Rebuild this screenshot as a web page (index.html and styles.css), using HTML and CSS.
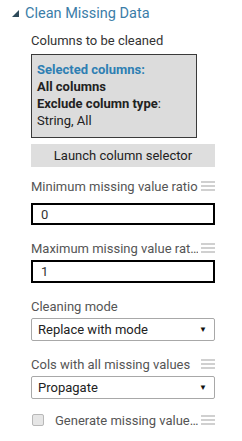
FILE: index.html
```html
<!DOCTYPE html>
<html lang="en">
<head>
    <meta charset="UTF-8">
    <title>Clean Missing Data</title>
    <link rel="stylesheet" href="styles.css">
</head>
<body>
    <div class="panel">
        <div class="panel-title">
            <span class="caret"></span>
            <span>Clean Missing Data</span>
        </div>

        <div class="props">
            <div class="field-label">Columns to be cleaned</div>
            <div class="col-box">
                <div class="sel-head">Selected columns:</div>
                <div class="strong">All columns</div>
                <div><span class="strong">Exclude column type</span>:</div>
                <div>String, All</div>
            </div>
            <button class="launch">Launch column selector</button>

            <div class="field-row first">
                <span class="field-text">Minimum missing value ratio</span>
                <span class="menu-icon"><i></i><i></i><i></i></span>
            </div>
            <input class="num-input" type="text" value="0">

            <div class="field-row">
                <span class="field-text">Maximum missing value rat…</span>
                <span class="menu-icon"><i></i><i></i><i></i></span>
            </div>
            <input class="num-input tall" type="text" value="1">

            <div class="field-row">
                <span class="field-text">Cleaning mode</span>
            </div>
            <div class="dropdown">
                <span>Replace with mode</span>
                <span class="arrow">&#9660;</span>
            </div>

            <div class="field-row">
                <span class="field-text">Cols with all missing values</span>
                <span class="menu-icon"><i></i><i></i><i></i></span>
            </div>
            <div class="dropdown">
                <span>Propagate</span>
                <span class="arrow">&#9660;</span>
            </div>

            <div class="check-row">
                <span class="checkbox"></span>
                <span class="field-text">Generate missing value…</span>
                <span class="menu-icon"><i></i><i></i><i></i></span>
            </div>
        </div>
    </div>
</body>
</html>
```

FILE: styles.css
```css
body {
    margin: 0;
    background-color: #ffffff;
    font-family: 'Roboto', 'Lato', sans-serif;
    color: #333333;
}

.panel {
    width: 242px;
}

.panel-title {
    display: flex;
    align-items: center;
    height: 20px;
    margin-top: 3px;
    padding-left: 12px;
    font-size: 14.5px;
    color: #3b7da8;
}

.caret {
    width: 0;
    height: 0;
    border-left: 7px solid transparent;
    border-bottom: 7px solid #2e4a5a;
    margin-right: 6px;
    margin-top: 1px;
}

.props {
    padding-left: 31px;
    width: 184px;
    font-size: 13px;
}

.field-label {
    margin-top: 8px;
    height: 20px;
    line-height: 20px;
}

.col-box {
    margin-top: 3px;
    border: 1px solid #3a3a3a;
    background-color: #dcdcdc;
    width: 154px;
    padding: 6px 5px 8px 5px;
    line-height: 17px;
    color: #222222;
}

.sel-head {
    font-weight: bold;
    color: #2e7fb3;
}

.strong {
    font-weight: bold;
}

.launch {
    display: block;
    width: 184px;
    height: 23px;
    margin-top: 6px;
    border: none;
    background-color: #dedede;
    font-family: inherit;
    font-size: 13px;
    color: #222222;
    padding: 0;
}

.field-row {
    display: flex;
    align-items: center;
    height: 20px;
    margin-top: 13px;
    margin-bottom: 2px;
}

.field-row.first {
    margin-top: 9px;
    margin-bottom: 7px;
}

.field-text {
    flex: 1;
    white-space: nowrap;
    overflow: hidden;
    color: #555555;
}

.menu-icon {
    flex-shrink: 0;
    display: flex;
    flex-direction: column;
    gap: 2px;
    width: 14px;
    margin-left: 3px;
}

.menu-icon i {
    display: block;
    height: 2px;
    background-color: #d0d0d0;
}

.num-input {
    display: block;
    box-sizing: border-box;
    width: 184px;
    height: 22px;
    border: 2px solid #000000;
    padding: 0 0 0 8px;
    font-family: inherit;
    font-size: 13px;
    color: #333333;
    outline: none;
}

.num-input.tall {
    height: 23px;
}

.dropdown {
    box-sizing: border-box;
    display: flex;
    align-items: center;
    justify-content: space-between;
    width: 184px;
    height: 23px;
    border: 1px solid #a8a8a8;
    border-radius: 2px;
    padding: 0 7px 0 6px;
    color: #222222;
}

.arrow {
    font-size: 8px;
    color: #111111;
}

.check-row {
    display: flex;
    align-items: center;
    height: 20px;
    margin-top: 11px;
}

.checkbox {
    box-sizing: border-box;
    width: 12px;
    height: 12px;
    margin-left: 1px;
    margin-right: 11px;
    border: 1px solid #b8b8b8;
    border-radius: 2px;
    background-color: #e6e6e6;
}
```
